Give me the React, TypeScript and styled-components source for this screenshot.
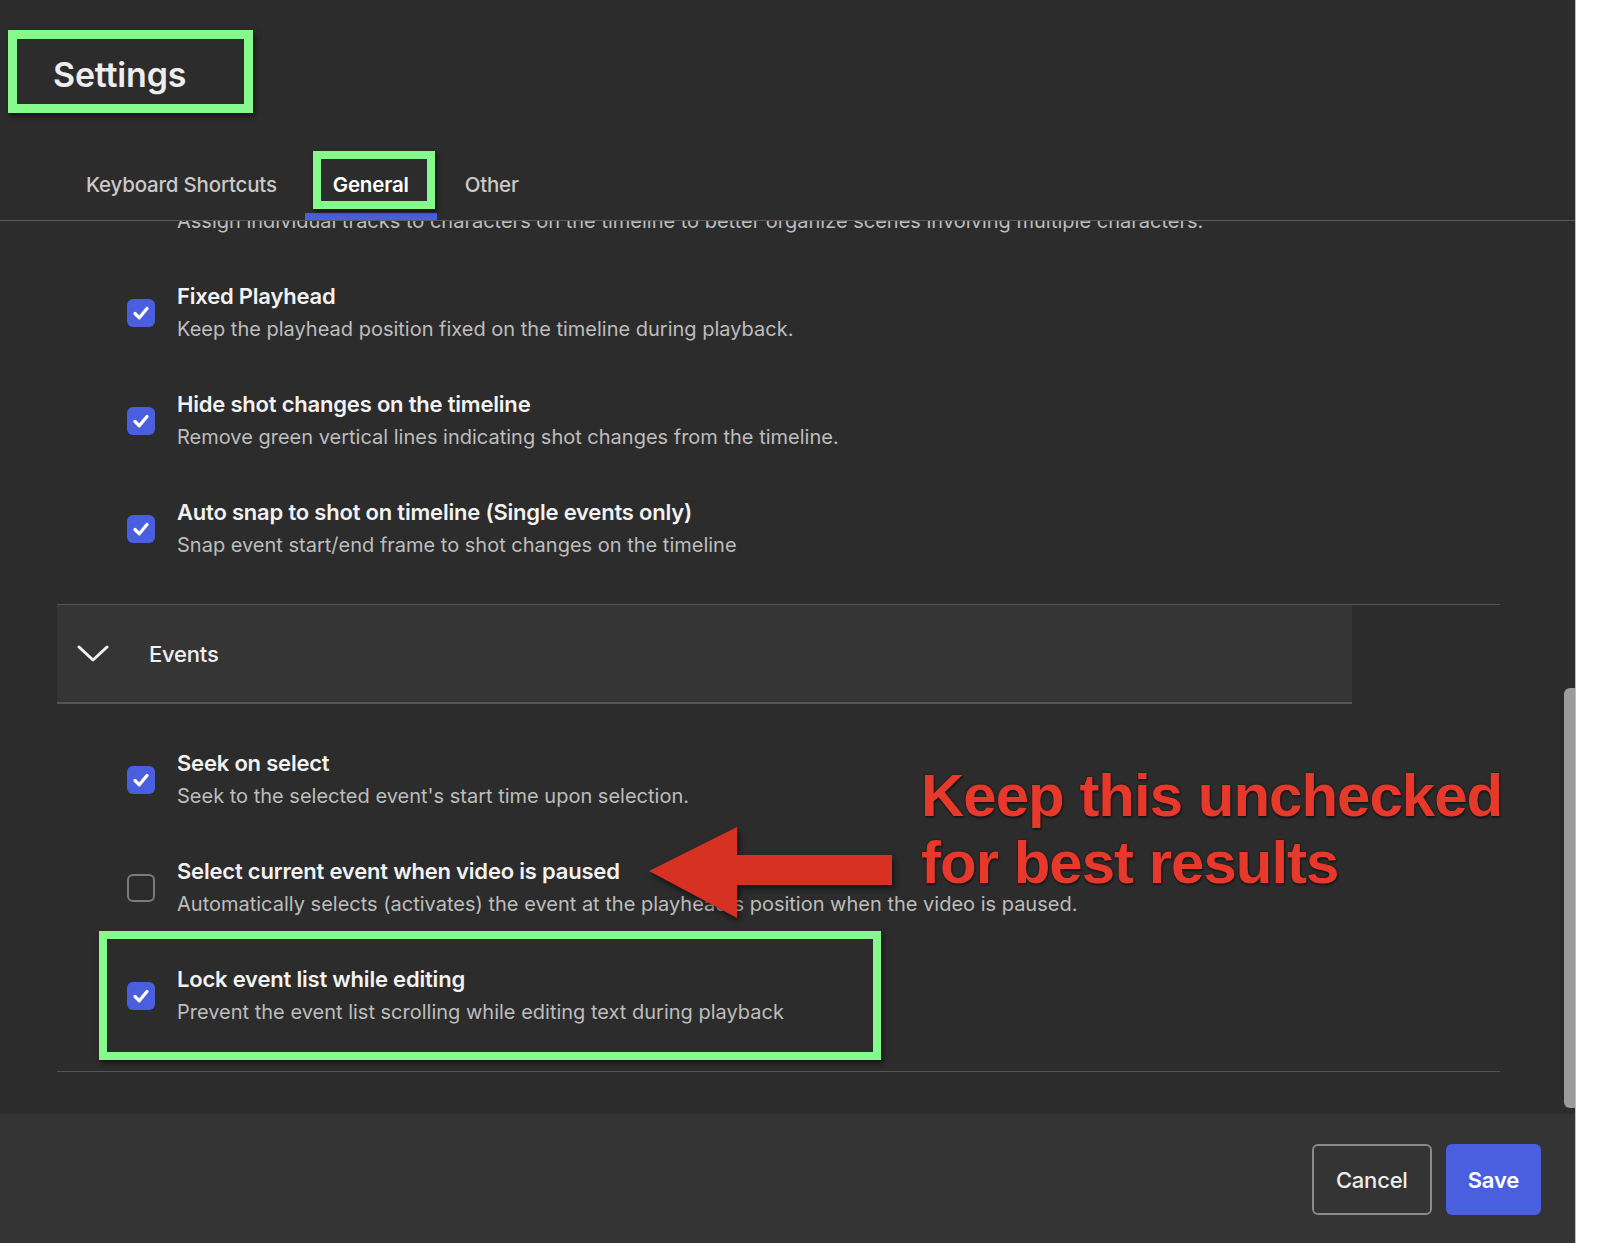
import React from "react";
import styled, { createGlobalStyle } from "styled-components";

const GREEN = "#85f98b";
const BLUE = "#4a5fe0";

const GlobalStyle = createGlobalStyle`
  html, body { margin: 0; padding: 0; background: #ffffff; }
  body { font-family: Inter, "Noto Sans", sans-serif; -webkit-font-smoothing: antialiased; }
  * { box-sizing: border-box; }
`;

const Page = styled.div`
  display: flex;
  width: 1600px;
  height: 1243px;
  background: #ffffff;
`;

const Panel = styled.div`
  width: 1576px;
  height: 1243px;
  background: #2c2c2c;
  border-right: 1px solid #bdbdbd;
  display: flex;
  flex-direction: column;
  position: relative;
  overflow: hidden;
`;

const Header = styled.div`
  padding: 30px 0 0 8px;
  height: 113px;
`;

const TitleBox = styled.div`
  width: 245px;
  height: 83px;
  border: 9px solid ${GREEN};
  display: flex;
  align-items: center;
  padding: 5px 0 0 36px;
  box-shadow: 2px 3px 5px rgba(0, 0, 0, 0.55);
`;

const Title = styled.h1`
  margin: 0;
  font-size: 34px;
  font-weight: 600;
  color: #ededed;
  letter-spacing: -0.2px;
`;

const TabBar = styled.div`
  height: 108px;
  display: flex;
  align-items: flex-end;
  padding-left: 58px;
  border-bottom: 1px solid #5a5a5a;
`;

const Tab = styled.div<{ $active?: boolean }>`
  position: relative;
  height: 56px;
  padding: 0 28px 8px;
  display: flex;
  align-items: center;
  font-size: 20.5px;
  font-weight: ${(p) => (p.$active ? 600 : 500)};
  color: ${(p) => (p.$active ? "#ffffff" : "#c9c9c9")};
  letter-spacing: -0.2px;
  border-bottom: 7px solid ${(p) => (p.$active ? BLUE : "transparent")};
`;

const TabHighlight = styled.span`
  position: absolute;
  left: 8px;
  top: -13px;
  right: 2px;
  height: 58px;
  border: 8px solid ${GREEN};
  box-shadow: 2px 3px 4px rgba(0, 0, 0, 0.5);
  pointer-events: none;
`;

const Content = styled.div`
  flex: 1;
  position: relative;
  overflow: hidden;
`;

const Scroller = styled.div`
  margin-top: -70px;
`;

const Section = styled.div`
  margin: 0 75px 0 57px;
`;

const Row = styled.div`
  display: flex;
  align-items: center;
  gap: 22px;
  padding: 21px 0 21px 70px;
`;

const Box = styled.span<{ $checked?: boolean }>`
  flex: none;
  width: 28px;
  height: 28px;
  border-radius: 6px;
  display: flex;
  align-items: center;
  justify-content: center;
  background: ${(p) => (p.$checked ? BLUE : "transparent")};
  border: ${(p) => (p.$checked ? "none" : "2px solid #7b7b7b")};
`;

const TextCol = styled.div`
  display: flex;
  flex-direction: column;
`;

const RowTitle = styled.div`
  font-size: 22px;
  line-height: 33px;
  font-weight: 600;
  color: #f2f2f2;
  letter-spacing: -0.2px;
`;

const RowDesc = styled.div`
  font-size: 20px;
  line-height: 33px;
  font-weight: 400;
  color: #bdbdbd;
`;

const Divider = styled.div<{ $top: number }>`
  height: 1px;
  background: #555555;
  margin-top: ${(p) => p.$top}px;
`;

const GroupHeader = styled.div`
  width: 1295px;
  height: 99px;
  background: #353535;
  border-bottom: 2px solid #555555;
  display: flex;
  align-items: center;
  gap: 40px;
  padding-left: 20px;
`;

const GroupTitle = styled.span`
  font-size: 22px;
  font-weight: 500;
  color: #f0f0f0;
  letter-spacing: -0.2px;
`;

const GroupList = styled.div`
  padding-top: 22px;
`;

const Scrollbar = styled.div`
  position: absolute;
  right: 0;
  top: 467px;
  width: 11px;
  height: 420px;
  background: #9b9b9b;
  border-radius: 6px 0 0 6px;
`;

const Highlight = styled.div`
  position: absolute;
  left: 99px;
  top: 710px;
  width: 782px;
  height: 129px;
  border: 8px solid ${GREEN};
  box-shadow: 2px 3px 5px rgba(0, 0, 0, 0.5);
  pointer-events: none;
`;

const ArrowSvg = styled.svg`
  position: absolute;
  left: 640px;
  top: 600px;
  overflow: visible;
  filter: drop-shadow(2px 3px 3px rgba(0, 0, 0, 0.6));
`;

const Note = styled.div`
  position: absolute;
  left: 921px;
  top: 541px;
  font-family: "Liberation Sans", Arial, sans-serif;
  font-weight: 700;
  font-size: 60px;
  line-height: 67px;
  letter-spacing: -1px;
  color: #e6392c;
  text-shadow: 0 0 2px rgba(0, 0, 0, 0.7), 1px 2px 2px rgba(0, 0, 0, 0.4);
  white-space: nowrap;
`;

const Footer = styled.div`
  height: 129px;
  flex: none;
  background: #343434;
  display: flex;
  justify-content: flex-end;
  align-items: flex-start;
  gap: 14px;
  padding: 30px 34px 0 0;
`;

const Button = styled.button<{ $primary?: boolean }>`
  height: 71px;
  padding: 0 22px;
  border-radius: 6px;
  font-family: Inter, "Noto Sans", sans-serif;
  font-size: 22px;
  font-weight: ${(p) => (p.$primary ? 600 : 500)};
  letter-spacing: -0.2px;
  background: ${(p) => (p.$primary ? BLUE : "transparent")};
  border: ${(p) => (p.$primary ? "none" : "2px solid #8a8a8a")};
  color: ${(p) => (p.$primary ? "#ffffff" : "#ececec")};
`;

const Check = ({ checked }: { checked: boolean }) => (
  <Box $checked={checked}>
    {checked && (
      <svg width="28" height="28" viewBox="0 0 28 28">
        <polyline
          points="8,14.5 12.3,18.8 20,9.5"
          fill="none"
          stroke="#ffffff"
          strokeWidth="3.3"
          strokeLinecap="round"
          strokeLinejoin="round"
        />
      </svg>
    )}
  </Box>
);

type Item = { title: string; desc: string; checked: boolean };

const general: Item[] = [
  {
    title: "Character Tracks",
    desc: "Assign individual tracks to characters on the timeline to better organize scenes involving multiple characters.",
    checked: true,
  },
  {
    title: "Fixed Playhead",
    desc: "Keep the playhead position fixed on the timeline during playback.",
    checked: true,
  },
  {
    title: "Hide shot changes on the timeline",
    desc: "Remove green vertical lines indicating shot changes from the timeline.",
    checked: true,
  },
  {
    title: "Auto snap to shot on timeline (Single events only)",
    desc: "Snap event start/end frame to shot changes on the timeline",
    checked: true,
  },
];

const events: Item[] = [
  {
    title: "Seek on select",
    desc: "Seek to the selected event's start time upon selection.",
    checked: true,
  },
  {
    title: "Select current event when video is paused",
    desc: "Automatically selects (activates) the event at the playhead's position when the video is paused.",
    checked: false,
  },
  {
    title: "Lock event list while editing",
    desc: "Prevent the event list scrolling while editing text during playback",
    checked: true,
  },
];

const SettingRow = ({ item }: { item: Item }) => (
  <Row>
    <Check checked={item.checked} />
    <TextCol>
      <RowTitle>{item.title}</RowTitle>
      <RowDesc>{item.desc}</RowDesc>
    </TextCol>
  </Row>
);

export default function App() {
  return (
    <>
      <GlobalStyle />
      <Page>
        <Panel>
          <Header>
            <TitleBox>
              <Title>Settings</Title>
            </TitleBox>
          </Header>
          <TabBar>
            <Tab>Keyboard Shortcuts</Tab>
            <Tab $active>
              General
              <TabHighlight />
            </Tab>
            <Tab>Other</Tab>
          </TabBar>
          <Content>
            <Scroller>
              <Section>
                {general.map((it) => (
                  <SettingRow key={it.title} item={it} />
                ))}
                <Divider $top={21} />
                <GroupHeader>
                  <svg width="32" height="18" viewBox="0 0 32 18">
                    <polyline
                      points="2,2 16,15 30,2"
                      fill="none"
                      stroke="#f0f0f0"
                      strokeWidth="3"
                      strokeLinecap="round"
                      strokeLinejoin="round"
                    />
                  </svg>
                  <GroupTitle>Events</GroupTitle>
                </GroupHeader>
                <GroupList>
                  {events.map((it) => (
                    <SettingRow key={it.title} item={it} />
                  ))}
                </GroupList>
                <Divider $top={21} />
              </Section>
            </Scroller>
            <Scrollbar />
            <Highlight />
            <ArrowSvg width="260" height="100" viewBox="0 0 260 100">
              <polygon
                points="9,50 97,6 97,34 252,34 252,64 97,64 97,97"
                fill="#d63122"
              />
            </ArrowSvg>
            <Note>
              Keep this unchecked
              <br />
              for best results
            </Note>
          </Content>
          <Footer>
            <Button>Cancel</Button>
            <Button $primary>Save</Button>
          </Footer>
        </Panel>
      </Page>
    </>
  );
}
